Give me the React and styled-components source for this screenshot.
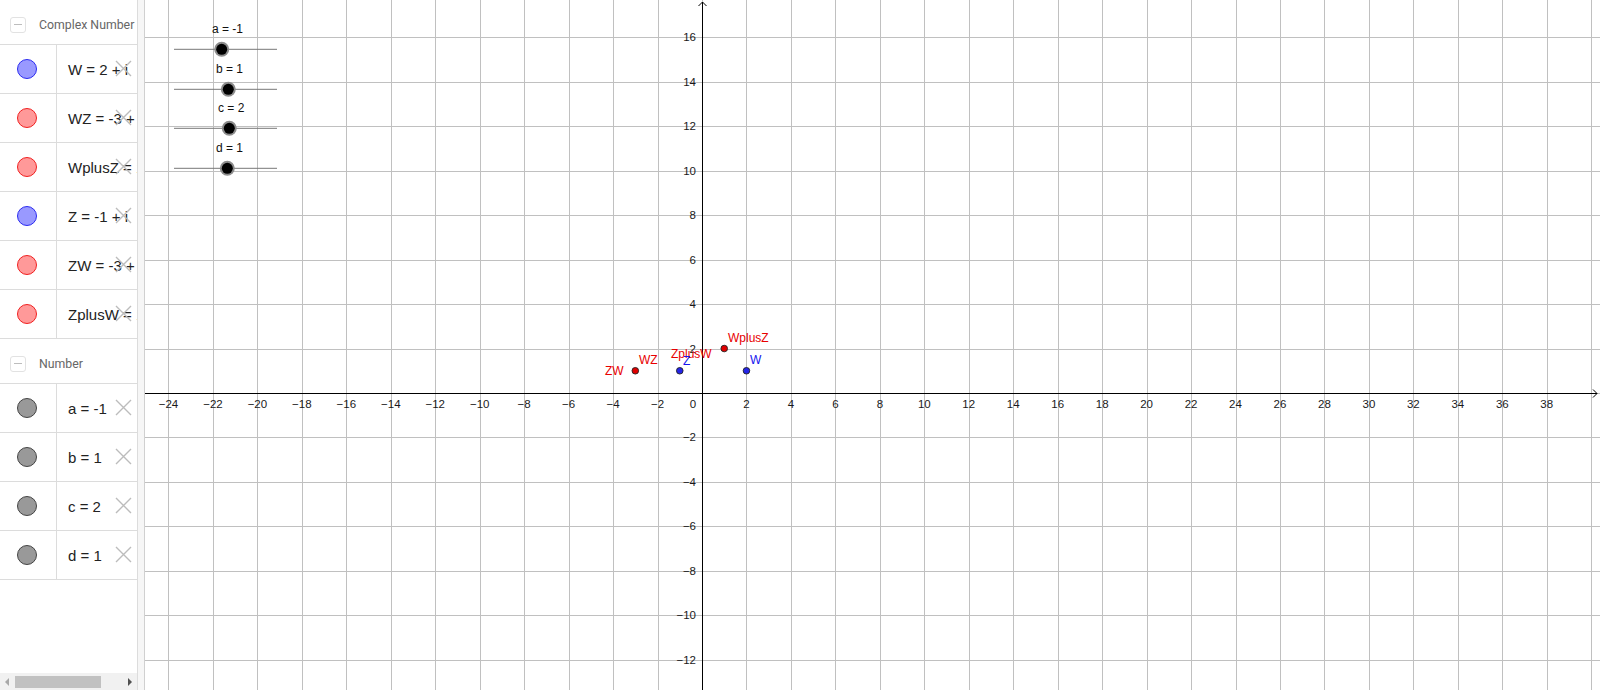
import React from "react";
import styled, { createGlobalStyle } from "styled-components";

const GlobalStyle = createGlobalStyle`
  html, body {
    margin: 0;
    padding: 0;
    overflow: hidden;
    background: #fff;
  }
  * { box-sizing: border-box; }
`;

const Layout = styled.div`
  display: flex;
  width: 1600px;
  height: 690px;
  overflow: hidden;
  font-family: "Liberation Sans", Arial, sans-serif;
`;

const AlgebraPanel = styled.div`
  width: 138px;
  flex: none;
  display: flex;
  flex-direction: column;
  border-right: 1px solid #dcdcdc;
  overflow: hidden;
`;

const GroupHeader = styled.div`
  height: 45px;
  flex: none;
  display: flex;
  align-items: center;
  padding: 5px 0 0 10px;
  border-bottom: 1px solid #dcdcdc;
  overflow: hidden;
`;

const CollapseBox = styled.div`
  width: 16px;
  height: 16px;
  flex: none;
  border: 1px solid #e2e2e2;
  border-radius: 3px;
  display: flex;
  align-items: center;
  justify-content: center;
  margin-right: 13px;
  &::after {
    content: "";
    width: 8px;
    height: 1px;
    background: #bdbdbd;
  }
`;

const GroupTitle = styled.span`
  font-family: Roboto, "Liberation Sans", sans-serif;
  font-size: 12.3px;
  color: #666;
  white-space: nowrap;
`;

const ItemRow = styled.div`
  position: relative;
  height: 49px;
  flex: none;
  display: flex;
  border-bottom: 1px solid #dcdcdc;
`;

const MarbleCell = styled.div`
  width: 57px;
  flex: none;
  display: flex;
  align-items: center;
  justify-content: center;
  border-right: 1px solid #dcdcdc;
  padding-right: 2px;
`;

const Marble = styled.div`
  width: 20px;
  height: 20px;
  border-radius: 50%;
  background: ${(p) => p.$fill};
  border: 1px solid ${(p) => p.$edge};
`;

const ItemText = styled.div`
  display: flex;
  align-items: center;
  padding-left: 11px;
  font-size: 15px;
  color: #222;
  white-space: nowrap;
`;

const DeleteButton = styled.svg`
  position: absolute;
  left: 115px;
  top: 50%;
  margin-top: -9px;
  width: 17px;
  height: 17px;
`;

const PanelFill = styled.div`
  flex: 1;
`;

const HScrollbar = styled.div`
  height: 17px;
  flex: none;
  display: flex;
  align-items: center;
  padding: 0 5px;
  background: #f1f1f1;
`;

const ScrollArrow = styled.div`
  width: 0;
  height: 0;
  border-top: 4px solid transparent;
  border-bottom: 4px solid transparent;
  ${(p) =>
    p.$dir === "left"
      ? "border-right: 4px solid #a8a8a8;"
      : "border-left: 4px solid #505050; margin-left: auto;"}
`;

const ScrollThumb = styled.div`
  width: 86px;
  height: 12px;
  margin-left: 6px;
  background: #c1c1c1;
`;

const Splitter = styled.div`
  width: 6px;
  flex: none;
  background: #f6f6f6;
`;

const GraphicsView = styled.div`
  flex: 1;
  border-left: 1px solid #d0d0d0;
  overflow: hidden;
  svg {
    display: block;
  }
`;

const complexItems = [
  { text: "W = 2 + i", kind: "blue" },
  { text: "WZ = -3 + i", kind: "red" },
  { text: "WplusZ = 1 + 2i", kind: "red" },
  { text: "Z = -1 + i", kind: "blue" },
  { text: "ZW = -3 + i", kind: "red" },
  { text: "ZplusW = 1 + 2i", kind: "red" },
];

const numberItems = ["a = -1", "b = 1", "c = 2", "d = 1"];

const marbleColors = {
  blue: { fill: "#9999ff", edge: "#2b2bf0" },
  red: { fill: "#ff9999", edge: "#f02020" },
  gray: { fill: "#999999", edge: "#444444" },
};

const DeleteIcon = () => (
  <DeleteButton viewBox="0 0 17 17">
    <path d="M1 1 L16 16 M16 1 L1 16" stroke="#bcbcbc" strokeWidth="1.4" fill="none" />
  </DeleteButton>
);

const Item = ({ text, kind }) => (
  <ItemRow>
    <MarbleCell>
      <Marble $fill={marbleColors[kind].fill} $edge={marbleColors[kind].edge} />
    </MarbleCell>
    <ItemText>{text}</ItemText>
    <DeleteIcon />
  </ItemRow>
);

// graphics view geometry (local to the svg, which starts at x=145)
const W = 1455;
const H = 690;
const S = 22.23;
const X0 = 557;
const Y0 = 393;
const px = (u) => X0 + u * S;
const py = (v) => Y0 - v * S;
const crisp = (n) => Math.round(n) + 0.5;
const fmt = (n) => (n < 0 ? "\u2212" + Math.abs(n) : String(n));

const range = (a, b, step) => {
  const out = [];
  for (let i = a; i <= b; i += step) out.push(i);
  return out;
};

const sliders = [
  { label: "a = -1", labelX: 67, y: 49.3, knob: 76.7 },
  { label: "b = 1", labelX: 71, y: 89.3, knob: 83.3 },
  { label: "c = 2", labelX: 73, y: 128.3, knob: 84.3 },
  { label: "d = 1", labelX: 71, y: 168.3, knob: 82.3 },
];

const points = [
  { x: 1, y: 2, color: "#e00000" },
  { x: 2, y: 1, color: "#2424e8" },
  { x: -1, y: 1, color: "#2424e8" },
  { x: -3, y: 1, color: "#e00000" },
];

const pointLabels = [
  { text: "WplusZ", x: 583, y: 342, color: "#e80000" },
  { text: "W", x: 605, y: 364, color: "#1414ee" },
  { text: "ZplusW", x: 526, y: 358, color: "#e80000" },
  { text: "Z", x: 538, y: 365, color: "#1414ee" },
  { text: "WZ", x: 494, y: 364, color: "#e80000" },
  { text: "ZW", x: 460, y: 375, color: "#e80000" },
];

const Graph = () => {
  const xs = range(-26, 42, 2).map(px).filter((x) => x > 0 && x < W);
  const ys = range(-16, 18, 2).map(py).filter((y) => y > 0 && y < H);
  return (
    <svg width={W} height={H} viewBox={`0 0 ${W} ${H}`}>
      <g stroke="#c0c0c0" strokeWidth="1">
        {xs.map((x) => (
          <line key={"v" + x} x1={crisp(x)} y1={0} x2={crisp(x)} y2={H} />
        ))}
        {ys.map((y) => (
          <line key={"h" + y} x1={0} y1={crisp(y)} x2={W} y2={crisp(y)} />
        ))}
      </g>

      <g stroke="#000" strokeWidth="1" fill="none">
        <line x1={0} y1={Y0 + 0.5} x2={W - 3} y2={Y0 + 0.5} />
        <polyline points={`${W - 7},${Y0 - 3.5} ${W - 3},${Y0 + 0.5} ${W - 7},${Y0 + 4.5}`} />
        <line x1={X0 + 0.5} y1={H} x2={X0 + 0.5} y2={2} />
        <polyline points={`${X0 - 3.5},6 ${X0 + 0.5},2 ${X0 + 4.5},6`} />
      </g>

      <g fontFamily="'Liberation Sans', Arial, sans-serif" fontSize="11.5" fill="#1a1a1a">
        {range(-24, 38, 2)
          .filter((k) => k !== 0)
          .map((k) => (
            <text key={"xl" + k} x={px(k)} y={Y0 + 15} textAnchor="middle">
              {fmt(k)}
            </text>
          ))}
        {range(-12, 16, 2)
          .filter((k) => k !== 0)
          .map((k) => (
            <text key={"yl" + k} x={X0 - 6} y={py(k) + 4} textAnchor="end">
              {fmt(k)}
            </text>
          ))}
        <text x={X0 - 9} y={Y0 + 15} textAnchor="middle">
          0
        </text>
      </g>

      {sliders.map((s) => (
        <g key={s.label}>
          <text x={s.labelX} y={s.y - 16} fontFamily="'Liberation Sans', Arial, sans-serif" fontSize="12" fill="#111">
            {s.label}
          </text>
          <line x1={29} y1={s.y} x2={132} y2={s.y} stroke="#777" strokeWidth="1" />
          <circle cx={s.knob} cy={s.y} r="7.5" fill="#8c8c8c" />
          <circle cx={s.knob} cy={s.y} r="5.5" fill="#000" />
        </g>
      ))}

      {points.map((p) => (
        <circle
          key={p.x + "," + p.y}
          cx={px(p.x)}
          cy={py(p.y)}
          r="3.3"
          fill={p.color}
          stroke="#222"
          strokeWidth="0.9"
        />
      ))}

      <g fontFamily="'Liberation Sans', Arial, sans-serif" fontSize="12">
        {pointLabels.map((l) => (
          <text key={l.text} x={l.x} y={l.y} fill={l.color}>
            {l.text}
          </text>
        ))}
      </g>
    </svg>
  );
};

export default function App() {
  return (
    <>
      <GlobalStyle />
      <Layout>
        <AlgebraPanel>
          <GroupHeader>
            <CollapseBox />
            <GroupTitle>Complex Number</GroupTitle>
          </GroupHeader>
          {complexItems.map((it) => (
            <Item key={it.text} text={it.text} kind={it.kind} />
          ))}
          <GroupHeader>
            <CollapseBox />
            <GroupTitle>Number</GroupTitle>
          </GroupHeader>
          {numberItems.map((t) => (
            <Item key={t} text={t} kind="gray" />
          ))}
          <PanelFill />
          <HScrollbar>
            <ScrollArrow $dir="left" />
            <ScrollThumb />
            <ScrollArrow $dir="right" />
          </HScrollbar>
        </AlgebraPanel>
        <Splitter />
        <GraphicsView>
          <Graph />
        </GraphicsView>
      </Layout>
    </>
  );
}
